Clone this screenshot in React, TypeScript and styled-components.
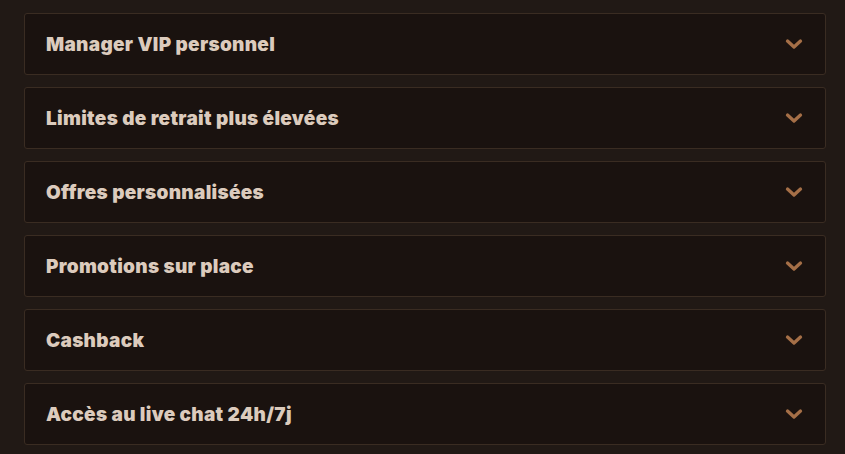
import React from "react";
import styled, { createGlobalStyle } from "styled-components";

const Global = createGlobalStyle`
  html, body { margin: 0; padding: 0; background: #211915; }
  body { font-family: "Inter", "Open Sans", sans-serif; }
`;

const Page = styled.div`
  padding: 13px 19px 0 24px;
  display: flex;
  flex-direction: column;
  gap: 12px;
  min-height: 454px;
  box-sizing: border-box;
`;

const Item = styled.button`
  display: flex;
  align-items: center;
  justify-content: space-between;
  height: 62px;
  box-sizing: border-box;
  padding: 0 22px 0 21px;
  background: #1a120f;
  border: 1px solid #3a2c22;
  border-radius: 3px;
  cursor: pointer;
  width: 100%;
  text-align: left;
`;

const Title = styled.span`
  font-family: "Inter", sans-serif;
  font-weight: 900;
  font-size: 19px;
  color: #dccbbd;
  letter-spacing: 0.3px;
`;

const Chevron = () => (
  <svg width="18" height="12" viewBox="0 0 18 12" fill="none">
    <path d="M2.5 3 L9 9 L15.5 3" stroke="#a56f47" strokeWidth="3.3" strokeLinecap="round" strokeLinejoin="round" />
  </svg>
);

const items = [
  "Manager VIP personnel",
  "Limites de retrait plus élevées",
  "Offres personnalisées",
  "Promotions sur place",
  "Cashback",
  "Accès au live chat 24h/7j",
];

export default function App() {
  return (
    <>
      <Global />
      <Page>
        {items.map((t) => (
          <Item key={t}>
            <Title>{t}</Title>
            <Chevron />
          </Item>
        ))}
      </Page>
    </>
  );
}
